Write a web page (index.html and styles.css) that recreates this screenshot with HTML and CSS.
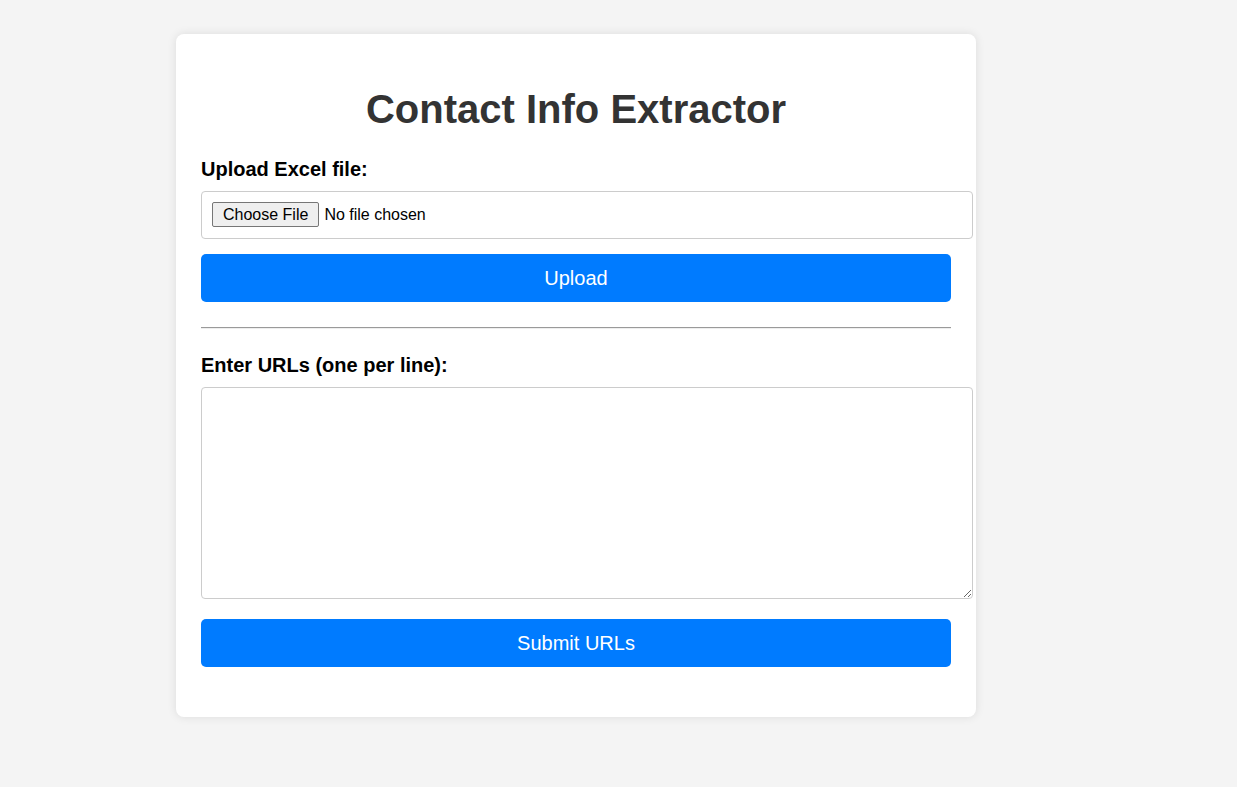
FILE: index.html
```html
<!DOCTYPE html>
<html lang="en">
<head>
<meta charset="utf-8">
<title>Contact Info Extractor</title>
<link rel="stylesheet" href="styles.css">
</head>
<body>
<div class="card">
  <h1 class="title">Contact Info Extractor</h1>
  <form class="form upload-form">
    <label class="label" for="file">Upload Excel file:</label>
    <input class="field file-field" type="file" id="file">
    <button class="btn" type="button">Upload</button>
  </form>
  <hr class="divider">
  <form class="form url-form">
    <label class="label" for="urls">Enter URLs (one per line):</label>
    <textarea class="field url-field" id="urls"></textarea>
    <button class="btn btn-submit" type="button">Submit URLs</button>
  </form>
</div>
</body>
</html>
```
FILE: styles.css
```css
html, body {
  margin: 0;
  padding: 0;
}
body {
  background: #f4f4f4;
  font-family: "Liberation Sans", Arial, sans-serif;
  min-height: 787px;
}
.card {
  width: 750px;
  margin: 34px 0 0 176px;
  padding: 25px 25px 50px;
  background: #fff;
  border-radius: 8px;
  box-shadow: 0 0 10px rgba(0, 0, 0, 0.1);
}
.title {
  margin: 27px 0 26px;
  font-size: 40px;
  line-height: 46px;
  font-weight: bold;
  color: #333;
  text-align: center;
}
.form {
  margin: 0;
}
.label {
  display: block;
  font-size: 20px;
  line-height: 23px;
  font-weight: bold;
  color: #000;
  margin-bottom: 10px;
}
.field {
  display: block;
  width: 750px;
  padding: 10px;
  border: 1px solid #ccc;
  border-radius: 4px;
  font-family: "Liberation Sans", Arial, sans-serif;
  font-size: 16px;
  background: #fff;
  color: #000;
}
.file-field {
  height: 48px;
  box-sizing: border-box;
  width: 772px;
  margin-bottom: 15px;
}
.file-field::file-selector-button {
  font-family: "Liberation Sans", Arial, sans-serif;
  font-size: 16px;
  height: 25px;
  padding: 1px 10px;
  margin-right: 5px;
  border: 1px solid #767676;
  border-radius: 2px;
  background: #efefef;
  color: #000;
}
.url-field {
  height: 190px;
  margin-bottom: 20px;
  resize: both;
}
.btn {
  display: block;
  width: 100%;
  height: 48px;
  border: 0;
  border-radius: 5px;
  background: #007bff;
  color: #fff;
  font-family: "Liberation Sans", Arial, sans-serif;
  font-size: 20px;
  cursor: pointer;
}
.divider {
  margin: 25px 0 25px;
  border: 0;
  border-top: 1px solid #9a9a9a;
  border-bottom: 1px solid #eee;
}
```
